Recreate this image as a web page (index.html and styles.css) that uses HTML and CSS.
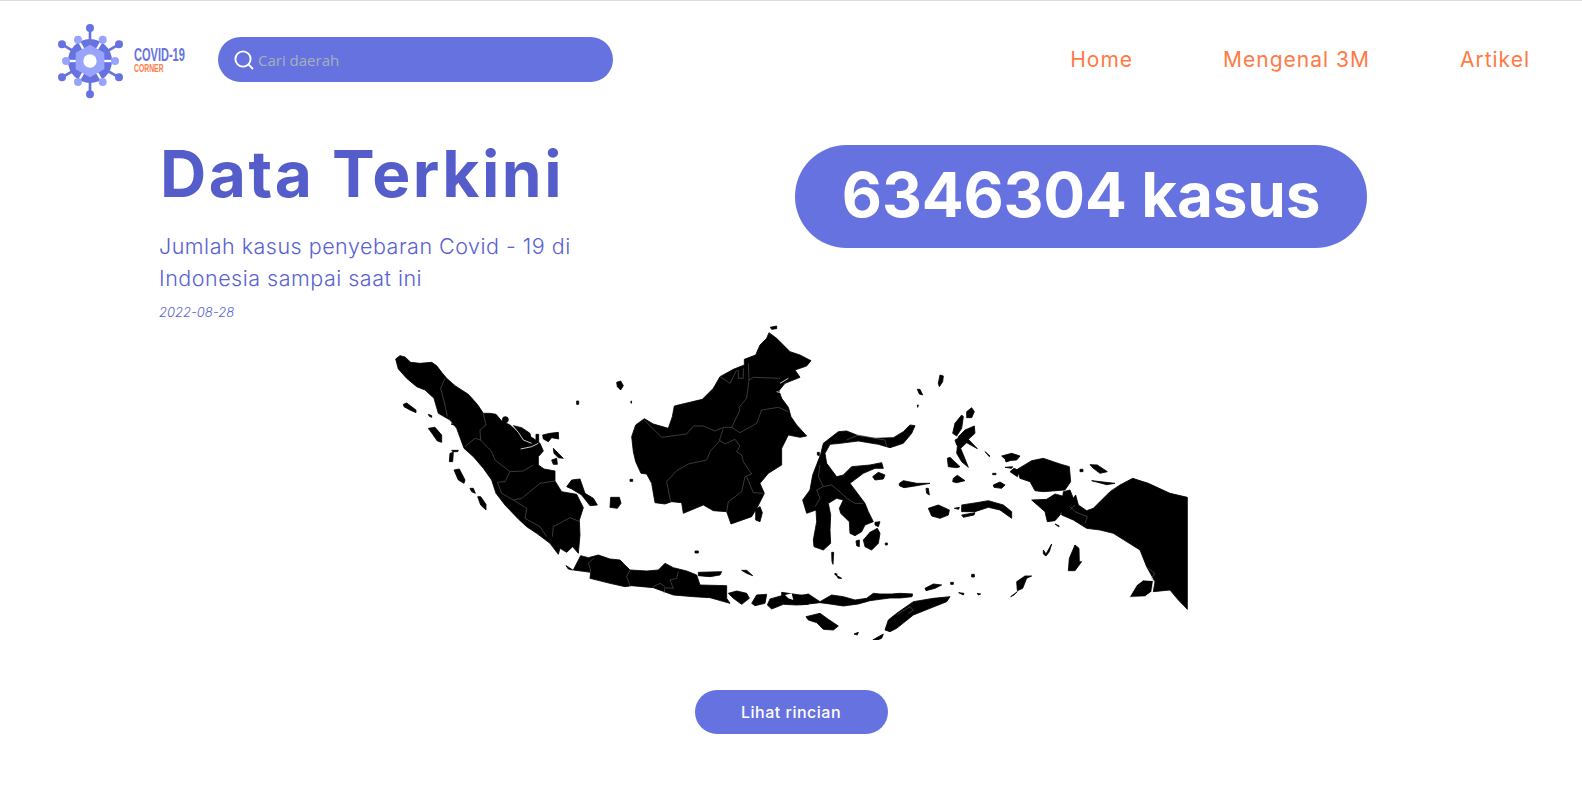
FILE: index.html
```html
<!DOCTYPE html>
<html lang="en">
<head>
  <meta charset="UTF-8">
  <meta name="viewport" content="width=device-width, initial-scale=1.0">
  <title>Covid-19 Corner</title>
  <link rel="stylesheet" href="styles.css">
</head>
<body>
  <header class="header">
    <a class="logo" href="#">
      <svg class="logo-mark" viewBox="0 0 225 234" width="75" height="78">
        <g stroke="#6672e0" stroke-width="8" fill="#6672e0">
          <line x1="105" y1="117" x2="105" y2="18"/>
          <line x1="105" y1="117" x2="105" y2="217"/>
          <line x1="105" y1="117" x2="21" y2="67"/>
          <line x1="105" y1="117" x2="192" y2="67"/>
          <line x1="105" y1="117" x2="21" y2="166"/>
          <line x1="105" y1="117" x2="192" y2="166"/>
          <circle cx="105" cy="18" r="8"/>
          <circle cx="105" cy="217" r="8"/>
          <circle cx="21" cy="67" r="8"/>
          <circle cx="192" cy="67" r="8"/>
          <circle cx="21" cy="166" r="8"/>
          <circle cx="192" cy="166" r="8"/>
        </g>
        <circle cx="105" cy="117" r="66" fill="#6672e0"/>
        <g stroke="#fff" stroke-width="7">
          <line x1="105" y1="117" x2="69" y2="53"/>
          <line x1="105" y1="117" x2="143" y2="53"/>
          <line x1="105" y1="117" x2="33" y2="117"/>
          <line x1="105" y1="117" x2="180" y2="117"/>
          <line x1="105" y1="117" x2="69" y2="180"/>
          <line x1="105" y1="117" x2="143" y2="180"/>
        </g>
        <g fill="#98a4fb">
          <circle cx="69" cy="53" r="12"/>
          <circle cx="143" cy="53" r="12"/>
          <circle cx="33" cy="117" r="12"/>
          <circle cx="180" cy="117" r="12"/>
          <circle cx="69" cy="180" r="12"/>
          <circle cx="143" cy="180" r="12"/>
          <path d="M105,68 L148,92 L148,142 L105,166 L62,142 L62,92 Z"/>
        </g>
        <circle cx="105" cy="117" r="20" fill="#fff"/>
      </svg>
      <span class="logo-text">
        <span class="logo-title">COVID-19</span>
        <span class="logo-sub">CORNER</span>
      </span>
    </a>
    <div class="search">
      <svg class="search-icon" viewBox="0 0 20 20" width="20" height="20">
        <circle cx="9" cy="9" r="7.6" fill="none" stroke="#fff" stroke-width="1.9"/>
        <line x1="14.6" y1="14.6" x2="19" y2="19" stroke="#fff" stroke-width="1.9"/>
      </svg>
      <input class="search-input" type="text" placeholder="Cari daerah">
    </div>
    <nav class="nav">
      <a href="#">Home</a>
      <a href="#">Mengenal 3M</a>
      <a href="#">Artikel</a>
    </nav>
  </header>

  <main>
    <section class="hero">
      <div class="hero-text">
        <h1>Data Terkini</h1>
        <p class="hero-desc">Jumlah kasus penyebaran Covid - 19 di Indonesia sampai saat ini</p>
        <p class="hero-date">2022-08-28</p>
      </div>
      <div class="case-pill">6346304 kasus</div>
    </section>

    <div class="map-wrap">
      <svg class="map" viewBox="380 320 840 320" width="840" height="320">
        <!-- sumatra -->
        <g transform="translate(390 345) scale(0.33333)">
          <path d="M17,42 L30,32 L45,36 L62,52 L90,55 L125,52 L140,62 L155,82 L170,100 L195,122 L235,148 L262,178 L280,205 L300,205 L318,208 L335,228 L360,240 L385,260 L410,270 L430,280 L450,295 L460,318 L445,335 L445,360 L462,372 L495,378 L495,408 L515,440 L560,448 L580,488 L568,525 L570,570 L565,625 L548,605 L530,622 L510,610 L505,628 L480,595 L440,565 L410,545 L385,522 L345,480 L318,445 L305,405 L280,370 L250,335 L222,310 L200,250 L180,225 L145,205 L132,160 L105,135 L80,125 L50,100 L25,72 Z"/>
          <path d="M40,178 L50,174 L78,195 L78,203 L60,195 L42,185 Z"/>
          <path d="M115,208 L125,212 L125,217 L118,214 Z"/>
          <path d="M115,250 L135,247 L155,270 L155,292 L142,288 L128,268 Z"/>
          <path d="M185,316 L205,316 L203,320 L188,320 Z"/>
          <path d="M180,325 L190,322 L188,350 L178,350 Z"/>
          <path d="M183,237 L197,238 L195,241 Z"/>
          <path d="M192,375 L208,372 L225,405 L222,415 L205,405 Z"/>
          <path d="M240,430 L250,430 L256,445 L245,440 Z"/>
          <path d="M263,455 L272,455 L288,478 L288,495 L272,480 Z"/>
          <path d="M530,425 L545,405 L570,402 L585,445 L610,460 L622,480 L600,482 L575,450 L545,432 Z"/>
          <path d="M485,345 L500,340 L502,358 L490,358 Z"/>
          <path d="M490,310 L505,325 L520,340 L505,338 L492,325 Z"/>
          <path d="M458,270 L480,265 L505,262 L506,282 L485,278 L475,290 L460,282 Z"/>
          <path d="M438,268 L446,268 L446,290 L438,285 Z"/>
          <path d="M560,168 L566,168 L566,178 L560,178 Z"/>
          <circle cx="346" cy="224" r="9"/>
          <path d="M370,242 L395,248 L420,265 L425,290 L405,285 L385,260 Z"/>
          <path class="line" d="M165,100 L152,130 L165,180 L172,215"/>
          <path class="line" d="M280,205 L288,240 L270,255 L272,285 L255,280 L225,305"/>
          <path class="line" d="M272,285 L305,320 L315,345 L360,380 L400,378 L430,360"/>
          <path class="line" d="M360,380 L345,410 L322,412 L335,445 L370,465 L395,460 L450,415 L495,408"/>
          <path class="line" d="M370,465 L410,490 L405,520 L450,545 L470,575"/>
          <path class="line" d="M487,575 L490,545 L540,518 L570,530"/>
          <path class="gap" d="M365,240 L385,262 L400,285 L425,295"/>
          <path class="gap" d="M392,312 L425,305 L445,295"/>
        </g>
        <!-- small islands around natuna and belitung -->
        <g transform="translate(380 320) scale(0.33333)">
          <path d="M692,532 L718,532 L723,550 L712,565 L690,562 Z"/>
          <path d="M710,187 L722,183 L730,197 L722,210 L712,200 Z"/>
          <path d="M752,245 L755,243 L754,250 Z"/>
          <path d="M750,478 L758,478 L758,484 L750,484 Z"/>
        </g>
        <!-- kalimantan -->
        <g transform="translate(625 320) scale(0.33333)">
          <path d="M20,350 L32,315 L58,296 L85,312 L130,325 L142,290 L148,258 L232,238 L265,205 L285,170 L325,148 L358,135 L358,118 L392,105 L405,75 L425,55 L432,38 L455,55 L470,70 L495,95 L525,105 L558,122 L545,138 L510,150 L525,172 L480,190 L462,212 L470,235 L490,262 L498,290 L515,315 L545,348 L525,352 L490,345 L470,385 L470,435 L430,460 L405,490 L418,520 L398,560 L380,590 L318,612 L305,575 L265,572 L235,555 L175,580 L170,548 L140,545 L120,552 L90,548 L80,490 L65,462 L48,460 L32,425 L25,395 Z"/>
          <path d="M392,568 L405,560 L412,578 L405,605 L392,600 Z"/>
          <path d="M436,22 L455,18 L455,26 L440,28 Z"/>
          <path class="line" d="M58,300 L110,352 L185,342 L205,318 L235,318 L270,333 L295,322 L320,322 L345,270 L342,262 L365,235 L372,180 L385,172 L465,175"/>
          <path class="line" d="M370,130 L372,180"/>
          <path class="line" d="M295,325 L282,365 L255,395 L245,420 L190,432 L155,452 L125,485 L137,545"/>
          <path class="line" d="M285,362 L300,372 L330,358 L345,378 L335,395 L350,405 L355,425 L380,462 L360,470 L350,515 L310,545 L305,575"/>
          <path class="line" d="M320,322 L345,338 L395,310 L410,270 L460,262 L490,275"/>
          <path class="line" d="M365,470 L385,518 L415,520"/>
          <path class="line" d="M285,170 L315,190 L335,150 M340,150 L340,175 L355,175 L355,145"/>
          <path class="gap" d="M465,190 L490,175"/>
          <path class="gap" d="M455,215 L478,220"/>
        </g>
        <!-- java, bali, lombok, sumbawa -->
        <g transform="translate(560 545) scale(0.33333)">
          <path d="M62,32 L85,38 L115,30 L150,42 L180,45 L195,60 L210,75 L260,78 L295,75 L315,55 L340,68 L380,78 L410,90 L420,120 L500,122 L500,160 L510,175 L450,158 L400,155 L340,150 L280,128 L215,122 L195,125 L150,115 L90,100 L92,82 L40,75 Z"/>
          <path d="M18,62 L28,68 L38,75 L25,72 Z"/>
          <path d="M415,82 L485,80 L480,90 L450,95 L415,92 Z"/>
          <path d="M545,76 L560,76 L578,92 L560,85 Z"/>
          <path d="M505,145 L530,138 L560,145 L568,160 L545,178 L520,160 Z"/>
          <path d="M590,150 L620,148 L615,175 L585,182 L575,175 Z"/>
          <path d="M630,162 L665,152 L665,142 L720,150 L745,150 L745,178 L710,180 L670,178 L635,192 L622,180 Z"/>
          <path class="hole" d="M675,150 L695,145 L700,165 L685,160 Z"/>
          <path d="M405,18 L415,18 L415,24 L405,24 Z"/>
          <path class="line" d="M100,40 L85,55 L92,75 L90,82"/>
          <path class="line" d="M210,75 L200,95 L210,122"/>
          <path class="line" d="M355,80 L350,100 L330,105 L340,130 L315,128 L312,145"/>
          <path class="line" d="M280,125 L300,115 L315,125"/>
        </g>
        <!-- sulawesi -->
        <g transform="translate(800 415) scale(0.33333)">
          <path d="M62,118 L70,85 L115,50 L140,48 L175,62 L225,70 L280,68 L310,50 L330,30 L345,32 L335,55 L310,85 L270,98 L235,88 L175,78 L120,85 L90,88 L75,115 L80,145 L110,185 L130,180 L155,155 L210,150 L245,143 L250,160 L225,160 L190,175 L150,205 L165,225 L195,265 L205,290 L220,320 L195,330 L185,350 L165,362 L150,355 L148,320 L122,295 L118,280 L130,255 L110,250 L85,265 L92,300 L90,345 L92,385 L70,405 L42,395 L40,375 L50,320 L48,285 L20,295 L8,255 L30,225 L38,180 Z"/>
          <path d="M298,205 L310,197 L350,205 L390,205 L345,213 L312,218 L298,212 Z"/>
          <path d="M378,220 L385,220 L388,240 L380,235 Z"/>
          <path d="M218,185 L235,172 L255,180 L250,192 L225,195 Z"/>
          <path d="M225,322 L240,320 L235,335 L225,330 Z"/>
          <path d="M190,375 L210,352 L232,340 L240,355 L235,385 L215,405 L195,395 Z"/>
          <path d="M168,378 L178,375 L178,395 L170,392 Z"/>
          <path d="M256,384 L262,384 L262,390 L256,390 Z"/>
          <path d="M52,112 L58,112 L58,122 L52,120 Z"/>
          <path d="M95,412 L101,412 L99,448 L96,440 Z"/>
          <path d="M105,475 L112,478 L105,480 Z"/>
          <path class="line" d="M140,75 L175,60 L225,70 L255,75 L260,95"/>
          <path class="line" d="M60,150 L55,185 L70,215 L50,225 L60,250 L45,275"/>
          <path class="line" d="M70,215 L95,210 L125,235 L140,250 L165,265 L190,265"/>
        </g>
        <!-- maluku -->
        <g transform="translate(900 370) scale(0.33333)">
          <path d="M120,15 L130,18 L128,35 L118,50 L115,40 Z"/>
          <path d="M52,58 L60,58 L68,75 L58,72 Z"/>
          <path d="M52,105 L55,105 L53,112 Z"/>
          <path d="M200,125 L215,113 L223,125 L215,143 L200,143 Z"/>
          <path d="M158,190 L165,160 L185,135 L190,140 L185,175 L170,198 Z"/>
          <path d="M175,200 L195,180 L223,168 L225,190 L205,208 L232,236 L200,218 L182,235 L205,292 L185,275 L170,250 Z"/>
          <path d="M165,210 L175,205 L180,225 L170,225 Z"/>
          <path d="M255,245 L270,258 L268,260 Z"/>
          <path d="M142,265 L150,262 L180,290 L170,293 L145,290 Z"/>
          <path d="M160,325 L172,316 L195,332 L170,338 L158,335 Z"/>
          <path d="M85,415 L115,405 L148,420 L145,435 L120,445 L95,438 Z"/>
          <path d="M185,405 L230,398 L265,392 L310,405 L335,425 L335,445 L300,420 L265,412 L225,425 L185,425 Z"/>
          <path d="M185,435 L225,428 L222,435 L190,442 Z"/>
          <path d="M163,415 L178,412 L176,418 Z"/>
          <path d="M278,310 L288,310 L288,314 L278,314 Z"/>
          <path d="M280,345 L300,336 L315,345 L305,355 L282,352 Z"/>
          <path d="M305,258 L335,250 L360,258 L350,270 L320,272 Z"/>
          <path d="M316,270 L330,272 L318,276 Z"/>
          <path d="M315,292 L338,290 L335,295 Z"/>
        </g>
        <!-- papua -->
        <g transform="translate(1010 450) scale(0.33333)">
          <path d="M22,58 L65,32 L100,25 L150,42 L178,50 L182,95 L165,120 L100,125 L75,122 L60,95 L30,85 Z"/>
          <path d="M0,65 L12,55 L28,62 L22,80 Z"/>
          <path d="M65,150 L110,148 L135,132 L165,140 L162,170 L150,195 L135,212 L112,215 L105,185 L82,165 Z"/>
          <path d="M160,125 L180,120 L190,145 L197,135 L205,165 L230,182 L250,175 L280,145 L300,125 L330,105 L368,85 L415,100 L480,130 L532,142 L532,478 L505,450 L480,420 L430,425 L435,395 L410,350 L390,300 L310,250 L270,240 L230,235 L190,210 L155,195 L155,170 Z"/>
          <path class="islet" d="M358,442 L380,405 L400,390 L430,392 L425,425 L405,440 Z"/>
          <path d="M240,44 L262,45 L292,65 L270,70 L250,55 Z"/>
          <path d="M210,58 L219,58 L219,65 L210,65 Z"/>
          <path d="M245,92 L315,100 L290,104 Z"/>
          <path d="M178,325 L195,285 L207,295 L208,335 L215,335 L195,362 L175,362 Z"/>
          <path d="M100,300 L108,312 L125,282 L118,305 L108,318 L100,312 Z"/>
          <path d="M20,395 L45,378 L65,378 L50,385 L38,415 L22,422 Z"/>
          <path d="M2,440 L22,425 L12,435 Z"/>
          <path d="M135,222 L148,228 L146,230 Z"/>
          <path class="line" d="M180,170 L195,185 L232,200 L225,220"/>
          <path class="line" d="M195,165 L180,180"/>
          <path class="line" d="M415,355 L435,370 L425,385 L435,395"/>
        </g>
        <!-- nusa tenggara -->
        <g transform="translate(800 570) scale(0.33333)">
          <path d="M0,78 L25,72 L60,95 L95,75 L130,80 L165,90 L200,85 L220,70 L240,72 L275,72 L300,70 L338,72 L336,80 L300,84 L270,84 L240,88 L210,92 L175,102 L130,108 L90,102 L60,98 L25,102 L0,104 Z"/>
          <path d="M18,140 L60,130 L85,148 L115,168 L100,180 L70,178 L50,158 L25,150 Z"/>
          <path d="M255,180 L265,150 L290,130 L340,95 L400,85 L450,80 L440,95 L390,115 L340,135 L290,175 L270,185 Z"/>
          <path d="M218,210 L250,192 L245,205 L222,214 Z"/>
          <path d="M162,192 L175,187 L172,195 Z"/>
          <path d="M375,55 L400,42 L425,45 L405,55 L378,62 Z"/>
          <path d="M476,68 L492,70 L490,75 Z"/>
          <path d="M532,70 L542,72 L535,75 Z"/>
          <path d="M515,13 L523,13 L523,21 L515,21 Z"/>
          <path d="M452,37 L460,37 L460,43 L452,43 Z"/>
          <path d="M105,10 L113,18 L125,25 L115,25 Z"/>
          <path class="line" d="M290,135 L305,125 L330,110 L340,120 L325,130"/>
        </g>
      </svg>
    </div>

    <div class="actions">
      <a class="btn" href="#">Lihat rincian</a>
    </div>
  </main>
</body>
</html>
```

FILE: styles.css
```css
* {
  box-sizing: border-box;
}
body {
  font-family: Inter, "Liberation Sans", sans-serif;
  margin: 0;
  padding: 0;
  background-color: #fff;
  border-top: 1px solid #dcdcdc;
  height: 791px;
  overflow: hidden;
}
a {
  text-decoration: none;
}

/* header */
.header {
  display: flex;
  align-items: center;
  height: 117px;
  padding: 0 52px 0 55px;
}
.logo {
  display: flex;
  align-items: center;
  gap: 4px;
  width: 163px;
}
.logo-mark {
  flex: none;
  margin-top: 3px;
}
.logo-text {
  display: flex;
  flex-direction: column;
  font-family: "Liberation Sans", sans-serif;
  font-weight: 700;
  white-space: nowrap;
}
.logo-title {
  color: #6672e0;
  font-size: 19px;
  line-height: 17px;
  transform: scaleX(0.58);
  transform-origin: left center;
}
.logo-sub {
  color: #ff7a45;
  font-size: 11px;
  line-height: 10px;
  transform: scaleX(0.62);
  transform-origin: left center;
}
.search {
  display: flex;
  align-items: center;
  gap: 4px;
  width: 395px;
  height: 45px;
  padding-left: 16px;
  background-color: #6672e0;
  border-radius: 23px;
}
.search-icon {
  flex: none;
}
.search-input {
  flex: 1;
  min-width: 0;
  border: none;
  outline: none;
  padding: 0;
  background: transparent;
  color: #fff;
  font-family: "Open Sans", sans-serif;
  font-size: 15px;
}
.search-input::placeholder {
  color: #a7b0b8;
  opacity: 1;
}
.nav {
  display: flex;
  gap: 90px;
  margin-left: auto;
}
.nav a {
  color: #ff7a45;
  font-size: 21px;
  letter-spacing: 1px;
}

/* hero */
.hero {
  display: flex;
  align-items: flex-start;
  padding-left: 159px;
}
.hero-text {
  width: 636px;
}
h1 {
  margin: 22px 0 0;
  padding-left: 1px;
  color: #545dca;
  font-size: 64px;
  font-weight: 700;
  line-height: 68px;
  letter-spacing: 2.5px;
}
.hero-desc {
  width: 440px;
  margin: 22px 0 0;
  color: #5862d2;
  font-size: 21.5px;
  font-weight: 300;
  line-height: 32px;
  letter-spacing: 0.5px;
}
.hero-date {
  margin: 10px 0 0;
  color: #5862d2;
  font-size: 13px;
  font-style: italic;
  font-weight: 300;
}
.case-pill {
  width: 572px;
  height: 103px;
  margin-top: 27px;
  background-color: #6672e0;
  border-radius: 52px;
  color: #fff;
  font-size: 62px;
  font-weight: 700;
  line-height: 100px;
  letter-spacing: -0.2px;
  text-align: center;
}

/* map */
.map-wrap {
  padding-left: 380px;
}
.map {
  display: block;
  fill: #000;
  stroke: #000;
  stroke-width: 2.5;
  stroke-linejoin: round;
}
.line {
  fill: none;
  stroke: #6b6b6b;
  stroke-width: 1.6;
}
.gap {
  fill: none;
  stroke: #fff;
  stroke-width: 2.4;
}
.hole {
  fill: #fff;
  stroke: none;
}
.islet {
  stroke: #fff;
  stroke-width: 2.4;
}

/* button */
.actions {
  display: flex;
  justify-content: center;
  margin-top: 50px;
}
.btn {
  width: 193px;
  height: 44px;
  background-color: #6672e0;
  border-radius: 22px;
  color: #fff;
  font-size: 16px;
  font-weight: 500;
  line-height: 44px;
  letter-spacing: 0.5px;
  text-align: center;
}
```
